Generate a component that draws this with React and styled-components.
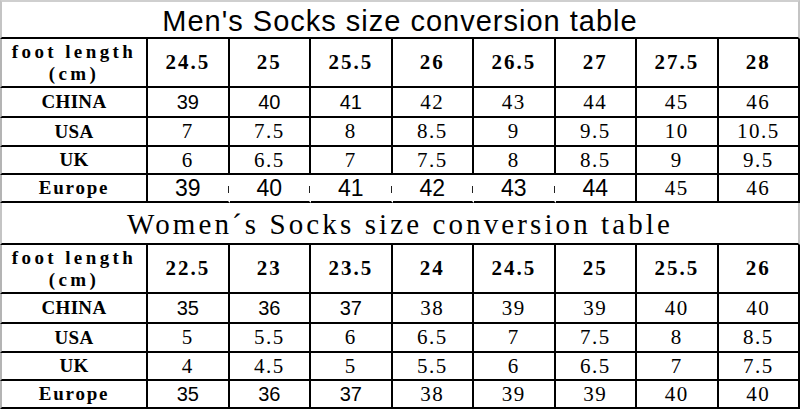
import React from "react";
import styled, { createGlobalStyle, css } from "styled-components";

const GlobalStyle = createGlobalStyle`
  html, body {
    margin: 0;
    padding: 0;
    background: #fff;
  }
`;

const men = {
  title: "Men's Socks size conversion table",
  titleFace: "sans",
  header: ["24.5", "25", "25.5", "26", "26.5", "27", "27.5", "28"],
  rows: [
    { label: "CHINA", values: ["39", "40", "41", "42", "43", "44", "45", "46"], sans: 3 },
    { label: "USA", values: ["7", "7.5", "8", "8.5", "9", "9.5", "10", "10.5"] },
    { label: "UK", values: ["6", "6.5", "7", "7.5", "8", "8.5", "9", "9.5"] },
    { label: "Europe", values: ["39", "40", "41", "42", "43", "44", "45", "46"], big: 6 },
  ],
};

const women = {
  title: "Women´s Socks size conversion table",
  titleFace: "serif",
  header: ["22.5", "23", "23.5", "24", "24.5", "25", "25.5", "26"],
  rows: [
    { label: "CHINA", values: ["35", "36", "37", "38", "39", "39", "40", "40"], sans: 3 },
    { label: "USA", values: ["5", "5.5", "6", "6.5", "7", "7.5", "8", "8.5"] },
    { label: "UK", values: ["4", "4.5", "5", "5.5", "6", "6.5", "7", "7.5"] },
    { label: "Europe", values: ["35", "36", "37", "38", "39", "39", "40", "40"], sans: 3 },
  ],
};

const SizeChart = () => {
  const renderSection = (section) => (
    <React.Fragment key={section.title}>
      <Title $face={section.titleFace} $first={section === men}>
        {section.title}
      </Title>
      <Label $tracking={3.4}>
        foot length
        <br />
        (cm)
      </Label>
      {section.header.map((h, i) => (
        <Cell key={"h" + i} $bold>
          {h}
        </Cell>
      ))}
      {section.rows.map((row) => (
        <React.Fragment key={row.label}>
          <Label $tracking={row.label === "Europe" ? 1.8 : 0.3}>{row.label}</Label>
          {row.values.map((v, i) => {
            let face = "serif";
            if (row.sans && i < row.sans) face = "sans";
            if (row.big && i < row.big) face = "big";
            return (
              <Cell key={i} $face={face} $broken={row.big && i < row.big - 1}>
                {v}
              </Cell>
            );
          })}
        </React.Fragment>
      ))}
    </React.Fragment>
  );

  return (
    <>
      <GlobalStyle />
      <Sheet>
        {renderSection(men)}
        {renderSection(women)}
      </Sheet>
    </>
  );
};

// Styled components
const Sheet = styled.div`
  width: 800px;
  height: 409px;
  display: grid;
  grid-template-columns: 148px repeat(8, 1fr);
  grid-template-rows: 39px 49px 30px 29px 28px 28px 42px 49px 30px 29px 28px 28px;
  box-sizing: border-box;
  overflow: hidden;
  color: #000;
`;

const Title = styled.div`
  grid-column: 1 / -1;
  box-sizing: border-box;
  display: flex;
  align-items: center;
  justify-content: center;
  border-left: 2px solid #c4c4c4;
  border-right: 2px solid #c4c4c4;
  border-bottom: 2px solid #000;
  ${(p) =>
    p.$first &&
    css`
      border-top: 2px solid #cfcfcf;
    `}
  ${(p) =>
    p.$face === "sans"
      ? css`
          font-family: "Liberation Sans", Arial, sans-serif;
          font-size: 29px;
          letter-spacing: 1px;
          padding-top: 3px;
        `
      : css`
          font-family: "Liberation Serif", "Times New Roman", serif;
          font-size: 29px;
          letter-spacing: 3.1px;
          padding-top: 2px;
        `}
`;

const Label = styled.div`
  box-sizing: border-box;
  display: flex;
  align-items: center;
  justify-content: center;
  text-align: center;
  border-left: 2px solid #b4b4b4;
  border-right: 2px solid #000;
  border-bottom: 2px solid #000;
  font-family: "Liberation Serif", "Times New Roman", serif;
  font-weight: bold;
  font-size: 19px;
  letter-spacing: ${(p) => p.$tracking}px;
  line-height: 22px;
`;

const Cell = styled.div`
  position: relative;
  box-sizing: border-box;
  display: flex;
  align-items: center;
  justify-content: center;
  border-right: 2px solid #000;
  border-bottom: 2px solid #000;
  font-family: "Liberation Serif", "Times New Roman", serif;
  font-size: 21px;
  letter-spacing: ${(p) => (p.$bold ? "2px" : "1.5px")};
  font-weight: ${(p) => (p.$bold ? "bold" : "normal")};
  ${(p) =>
    p.$face === "sans" &&
    css`
      font-family: "Liberation Sans", Arial, sans-serif;
      font-size: 20px;
      letter-spacing: 0;
    `}
  ${(p) =>
    p.$face === "big" &&
    css`
      font-family: "Liberation Sans", Arial, sans-serif;
      font-size: 23px;
      letter-spacing: 0;
    `}
  ${(p) =>
    p.$broken &&
    css`
      border-right-color: transparent;
      &::after {
        content: "";
        position: absolute;
        right: -1px;
        top: 11px;
        width: 1px;
        height: 7px;
        background: #222;
      }
    `}
`;

export default SizeChart;
